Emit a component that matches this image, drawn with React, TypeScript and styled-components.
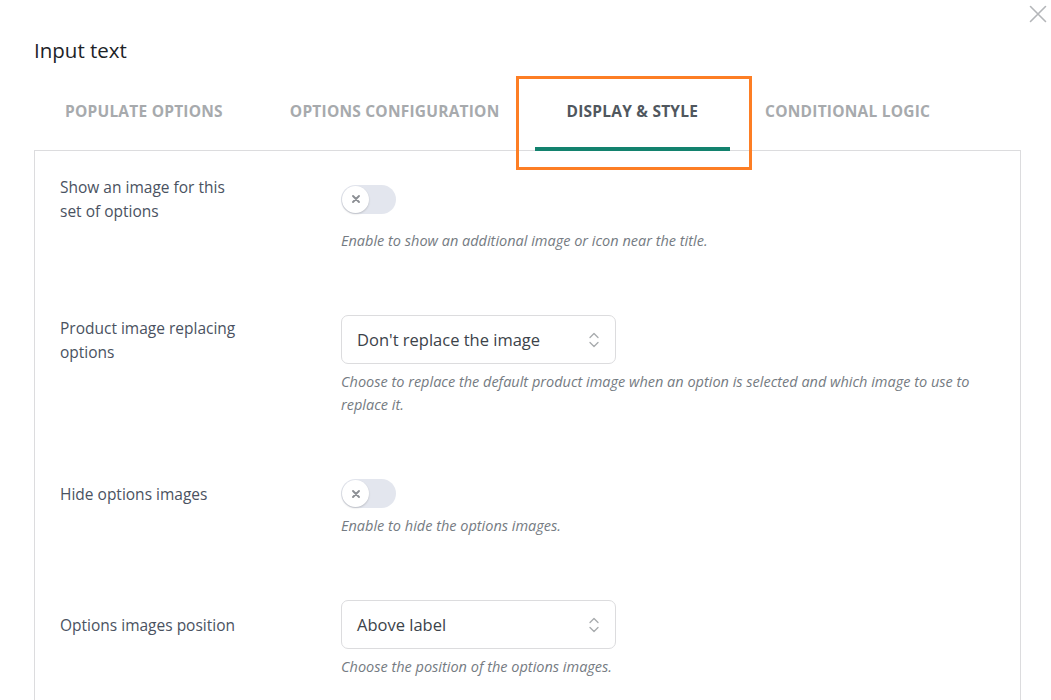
import React, { useState } from "react";
import styled, { createGlobalStyle } from "styled-components";

const GlobalStyle = createGlobalStyle`
  * {
    box-sizing: border-box;
  }
  body {
    margin: 0;
    background: #ffffff;
    font-family: "Open Sans", "Noto Sans", sans-serif;
    color: #3c434a;
  }
`;

type TabType = { id: string; label: string };

const TABS: TabType[] = [
  { id: "populate", label: "Populate options" },
  { id: "config", label: "Options configuration" },
  { id: "display", label: "Display & style" },
  { id: "logic", label: "Conditional logic" },
];

function CloseIcon() {
  return (
    <svg width="18" height="18" viewBox="0 0 18 18" fill="none">
      <path
        d="M1.5 1.5L16.5 16.5M16.5 1.5L1.5 16.5"
        stroke="#b4b6b9"
        strokeWidth="1.6"
        strokeLinecap="round"
      />
    </svg>
  );
}

function ChevronUpDown() {
  return (
    <svg width="12" height="18" viewBox="0 0 12 18" fill="none">
      <path
        d="M2 6.5L6 2.5L10 6.5M2 11.5L6 15.5L10 11.5"
        stroke="#a7aaad"
        strokeWidth="1.3"
        strokeLinecap="round"
        strokeLinejoin="round"
      />
    </svg>
  );
}

function Toggle() {
  return (
    <S.ToggleTrack>
      <S.ToggleKnob>
        <svg width="10" height="10" viewBox="0 0 10 10" fill="none">
          <path
            d="M2 2L8 8M8 2L2 8"
            stroke="#8c8f94"
            strokeWidth="1.9"
            strokeLinecap="round"
          />
        </svg>
      </S.ToggleKnob>
    </S.ToggleTrack>
  );
}

function Select({ value }: { value: string }) {
  return (
    <S.SelectBox>
      <span>{value}</span>
      <ChevronUpDown />
    </S.SelectBox>
  );
}

type FieldRowPropsType = {
  label: string;
  control: React.ReactNode;
  description: string;
};

function FieldRow({ label, control, description }: FieldRowPropsType) {
  return (
    <S.Row>
      <S.Label>{label}</S.Label>
      <S.Control>{control}</S.Control>
      <S.Description>{description}</S.Description>
    </S.Row>
  );
}

export default function App() {
  const [activeTab, setActiveTab] = useState("display");

  return (
    <>
      <GlobalStyle />
      <S.Modal>
        <S.CloseButton aria-label="Close">
          <CloseIcon />
        </S.CloseButton>
        <S.Title>Input text</S.Title>
        <S.TabBar>
          {TABS.map((tab) => (
            <S.Tab
              key={tab.id}
              $active={tab.id === activeTab}
              onClick={() => setActiveTab(tab.id)}
            >
              {tab.label}
              {tab.id === "display" && <S.Highlight />}
            </S.Tab>
          ))}
        </S.TabBar>
        <S.Panel>
          <FieldRow
            label="Show an image for this set of options"
            control={<Toggle />}
            description="Enable to show an additional image or icon near the title."
          />
          <FieldRow
            label="Product image replacing options"
            control={<Select value="Don't replace the image" />}
            description="Choose to replace the default product image when an option is selected and which image to use to replace it."
          />
          <FieldRow
            label="Hide options images"
            control={<Toggle />}
            description="Enable to hide the options images."
          />
          <FieldRow
            label="Options images position"
            control={<Select value="Above label" />}
            description="Choose the position of the options images."
          />
        </S.Panel>
      </S.Modal>
    </>
  );
}

const S = {
  Modal: styled.div`
    position: relative;
    padding: 36px 30px 0 34px;
    height: 700px;
    overflow: hidden;
  `,
  CloseButton: styled.button`
    position: absolute;
    top: 5px;
    right: 4px;
    border: none;
    background: none;
    padding: 0;
    cursor: pointer;
    display: flex;
  `,
  Title: styled.h2`
    margin: 0;
    font-size: 20.5px;
    font-weight: 400;
    line-height: 28px;
    color: #1d2327;
  `,
  TabBar: styled.div`
    display: flex;
    gap: 3px;
    margin-top: 12px;
    margin-left: -1px;
    position: relative;
    z-index: 1;
  `,
  Tab: styled.div<{ $active: boolean }>`
    position: relative;
    height: 75px;
    padding: 24px 32px 0;
    font-size: 15.5px;
    font-weight: 700;
    letter-spacing: 0.22px;
    text-transform: uppercase;
    line-height: 22px;
    white-space: nowrap;
    color: ${(p) => (p.$active ? "#50575e" : "#a7aaad")};
    cursor: pointer;
    border-bottom: 4px solid
      ${(p) => (p.$active ? "#13826e" : "transparent")};
  `,
  Highlight: styled.span`
    position: absolute;
    top: 0;
    left: -19px;
    right: -22px;
    bottom: -23px;
    border: 3.5px solid #fd7e24;
    pointer-events: none;
  `,
  Panel: styled.div`
    margin-top: -1px;
    border: 1px solid #dcdcde;
    border-bottom: none;
    padding: 24px 0 0 25px;
  `,
  Row: styled.div`
    display: grid;
    grid-template-columns: 281px 1fr;
    align-items: center;
    padding-bottom: 63px;
  `,
  Label: styled.div`
    grid-row: 1;
    grid-column: 1;
    max-width: 190px;
    font-size: 15.5px;
    line-height: 24px;
    color: #4a5261;
  `,
  Control: styled.div`
    grid-row: 1;
    grid-column: 2;
    display: flex;
    align-items: center;
  `,
  Description: styled.p`
    grid-row: 2;
    grid-column: 2;
    margin: 6px 0 0;
    font-size: 14.5px;
    font-style: italic;
    line-height: 23px;
    color: #757b82;
    padding-right: 40px;
  `,
  ToggleTrack: styled.div`
    width: 55px;
    height: 29px;
    border-radius: 15px;
    background: #e3e6ee;
    display: flex;
    align-items: center;
    padding-left: 1px;
  `,
  ToggleKnob: styled.span`
    width: 27px;
    height: 27px;
    border-radius: 50%;
    background: #ffffff;
    box-shadow: 0 1px 2px rgba(0, 0, 0, 0.18);
    display: flex;
    align-items: center;
    justify-content: center;
  `,
  SelectBox: styled.div`
    width: 275px;
    height: 49px;
    border: 1px solid #dcdcde;
    border-radius: 7px;
    background: #ffffff;
    display: flex;
    align-items: center;
    justify-content: space-between;
    padding: 0 15px 0 15px;
    font-size: 16.5px;
    color: #3c434a;
    span {
      line-height: 24px;
    }
  `,
};
